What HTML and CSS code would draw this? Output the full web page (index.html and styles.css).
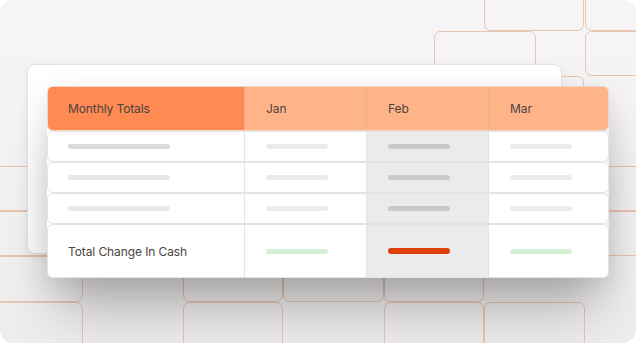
FILE: index.html
```html
<!DOCTYPE html>
<html lang="en">
<head>
<meta charset="utf-8">
<title>Monthly Totals</title>
<link rel="stylesheet" href="styles.css">
</head>
<body>
<div class="canvas">
  <svg class="grid-bg" width="636" height="343" viewBox="0 0 636 343" aria-hidden="true">
    <g fill="none" stroke="#e6c5b1" stroke-width="1">
      <rect x="484.5" y="-14.5" width="99" height="45" rx="6"/>
      <rect x="585.5" y="-14.5" width="99" height="45" rx="6"/>
      <rect x="434.5" y="31.5" width="101" height="44" rx="6"/>
      <rect x="585.5" y="31.5" width="99" height="44" rx="6"/>
      <rect x="484.5" y="76.5" width="99" height="44" rx="6"/>
      <rect x="585.5" y="166.5" width="99" height="44" rx="6"/>
      <rect x="585.5" y="211.5" width="99" height="44" rx="6"/>
      <rect x="-17.5" y="166.5" width="100" height="44" rx="6"/>
      <rect x="-17.5" y="211.5" width="100" height="44" rx="6"/>
      <rect x="-17.5" y="256.5" width="100" height="45" rx="6"/>
      <rect x="-17.5" y="302.5" width="100" height="45" rx="6"/>
      <rect x="183.5" y="256.5" width="99" height="45" rx="6"/>
      <rect x="283.5" y="256.5" width="100" height="45" rx="6"/>
      <rect x="384.5" y="256.5" width="99" height="45" rx="6"/>
      <rect x="183.5" y="302.5" width="99" height="45" rx="6"/>
      <rect x="384.5" y="302.5" width="99" height="45" rx="6"/>
      <rect x="484.5" y="302.5" width="100" height="45" rx="6"/>
    </g>
  </svg>

  <div class="back-card"></div>

  <div class="table">
    <div class="row head">
      <div class="cell label primary">Monthly Totals</div>
      <div class="cell">Jan</div>
      <div class="cell">Feb</div>
      <div class="cell">Mar</div>
    </div>
    <div class="row">
      <div class="cell label"><span class="bar wide dark"></span></div>
      <div class="cell"><span class="bar"></span></div>
      <div class="cell hl"><span class="bar mid"></span></div>
      <div class="cell"><span class="bar"></span></div>
    </div>
    <div class="row">
      <div class="cell label"><span class="bar wide"></span></div>
      <div class="cell"><span class="bar"></span></div>
      <div class="cell hl"><span class="bar mid"></span></div>
      <div class="cell"><span class="bar"></span></div>
    </div>
    <div class="row">
      <div class="cell label"><span class="bar wide"></span></div>
      <div class="cell"><span class="bar"></span></div>
      <div class="cell hl"><span class="bar mid"></span></div>
      <div class="cell"><span class="bar"></span></div>
    </div>
    <div class="row total">
      <div class="cell label">Total Change In Cash</div>
      <div class="cell"><span class="bar green"></span></div>
      <div class="cell hl"><span class="bar red"></span></div>
      <div class="cell"><span class="bar green"></span></div>
    </div>
  </div>
</div>
</body>
</html>
```
FILE: styles.css
```css
* { box-sizing: border-box; }

html, body {
  margin: 0;
  padding: 0;
  background: #ffffff;
}

body {
  font-family: Inter, "Liberation Sans", Arial, sans-serif;
  color: #4a4343;
}

.canvas {
  position: relative;
  width: 636px;
  height: 343px;
  border-radius: 14px;
  overflow: hidden;
  background: linear-gradient(180deg, #f6f4f4 0%, #f3f1f1 60%, #eeecec 100%);
  display: grid;
  grid-template-columns: 1fr;
  grid-template-rows: 1fr;
  align-items: start;
  justify-items: start;
}

.grid-bg {
  position: absolute;
  left: 0;
  top: 0;
}

.back-card {
  grid-area: 1 / 1;
  position: relative;
  margin: 64px 0 0 27px;
  width: 535px;
  height: 190px;
  background: #ffffff;
  border: 1px solid #e4e2e2;
  border-radius: 8px;
  box-shadow: 0 2px 10px rgba(0, 0, 0, 0.05);
}

.table {
  grid-area: 1 / 1;
  position: relative;
  margin: 86px 0 0 47px;
  width: 562px;
  display: flex;
  flex-direction: column;
  border-radius: 7px;
  box-shadow: 0 40px 50px -10px rgba(0, 0, 0, 0.26), 0 8px 30px rgba(0, 0, 0, 0.10);
}

.row {
  display: grid;
  grid-template-columns: 196px 122px 122px 122px;
  height: 31px;
  background: #ffffff;
  border: 1px solid #e4e4e4;
  border-radius: 6px;
  overflow: hidden;
}

.row.head {
  height: 45px;
  background: #ffb389;
  border-color: #eed6c8;
}

.row.total {
  height: 54px;
}

.cell {
  display: flex;
  align-items: center;
  padding-left: 21px;
  border-left: 1px solid #e4e4e4;
  font-size: 12px;
  letter-spacing: -0.1px;
}

.cell.label {
  border-left: none;
  padding-left: 20px;
}

.head .cell {
  border-left-color: #eeb08e;
}

.head .cell.primary {
  background: #ff8a52;
}

.cell.hl {
  background: #ebebeb;
}

.bar {
  display: block;
  width: 62px;
  height: 5px;
  border-radius: 3px;
  background: #ebebeb;
}

.bar.wide {
  width: 102px;
  background: #e8e8e8;
}

.bar.wide.dark {
  background: #dadada;
}

.bar.mid {
  background: #c9c9c9;
}

.bar.green {
  height: 5px;
  background: #d6f0d6;
}

.bar.red {
  height: 6px;
  background: #dc3f08;
}
```
